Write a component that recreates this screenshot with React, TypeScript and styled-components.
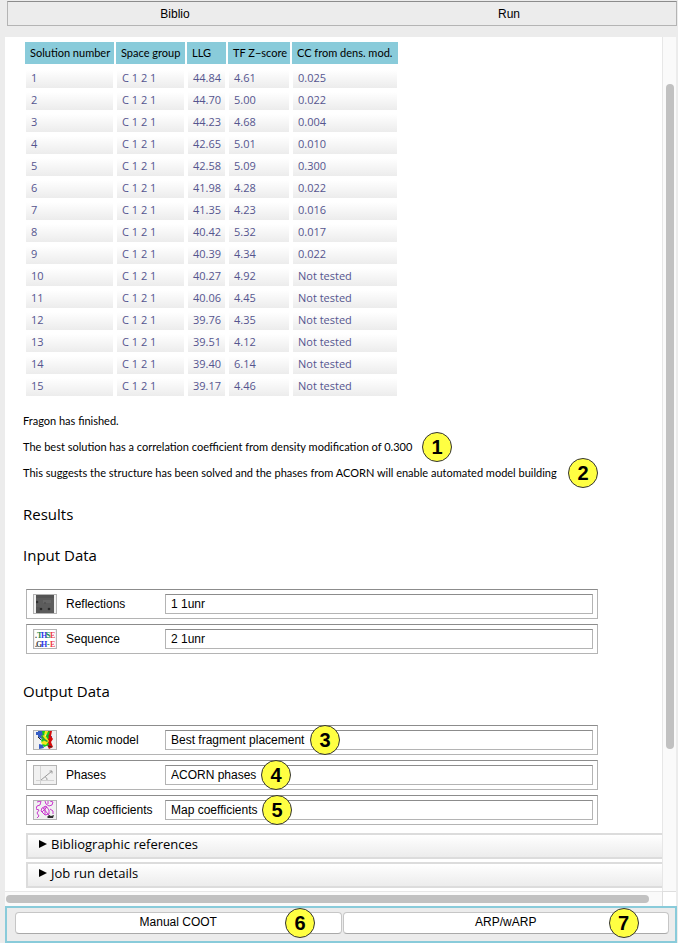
import React, { ReactNode } from "react";
import styled, { createGlobalStyle } from "styled-components";

const sans = `"Liberation Sans", Arial, Helvetica, sans-serif`;
const humanist = `"Open Sans", "Noto Sans", sans-serif`;
const narrow = `Lato, "Open Sans", sans-serif`;
const teal = "#89cbda";

const GlobalStyle = createGlobalStyle`
  * { box-sizing: border-box; }
  body {
    margin: 0;
    background: #ececec;
    color: #000;
    font-family: ${humanist};
    font-size: 11px;
  }
`;

const Window = styled.div`
  display: flex;
  flex-direction: column;
  min-height: 100vh;
  padding: 1px 1px 1px 5px;
`;

const TabBar = styled.nav`
  display: grid;
  grid-template-columns: 1fr 1fr;
  height: 25px;
  margin: 0 0 11px 2px;
  border: 1px solid #b4b4b4;
  border-top-color: #8c8c8c;
`;

const Tab = styled.button`
  padding: 0;
  border: 0;
  background: transparent;
  color: #000;
  font: 12px/22px ${sans};
`;

const ScrollArea = styled.div`
  flex: 1;
  display: grid;
  grid-template-columns: minmax(0, 1fr) 14px;
  grid-template-rows: 1fr 15px;
  margin-right: 1px;
`;

const Page = styled.main`
  overflow: hidden;
  padding: 3px 0 3px 18px;
  background: #fff;
`;

const VerticalTrack = styled.div`
  padding: 47px 2px 0 3px;
  border-left: 1px solid #e7e7e7;
  background: #fafafa;
`;

const HorizontalTrack = styled.div`
  padding: 3px 13px 0 1px;
  border-top: 1px solid #e7e7e7;
  background: #fafafa;
`;

const Corner = styled.div`
  border: 1px solid #dedede;
  border-width: 1px 0 0 1px;
  background: #fff;
`;

const Thumb = styled.div<{ $vertical?: boolean }>`
  width: ${(p) => (p.$vertical ? "8px" : "100%")};
  height: ${(p) => (p.$vertical ? "82.4%" : "8px")};
  border-radius: 4px;
  background: #c1c1c1;
`;

const SolutionTable = styled.table`
  width: 377px;
  table-layout: fixed;
  border-collapse: separate;
  border-spacing: 2px;
`;

const Column = styled.col<{ $width: number }>`
  width: ${(p) => p.$width}px;
`;

const HeadCell = styled.th`
  height: 25px;
  padding: 0 0 0 5px;
  border-bottom: 3px solid #fff;
  background: ${teal} padding-box;
  font: 11px/22px ${narrow};
  text-align: left;
  white-space: nowrap;
`;

const Cell = styled.td`
  height: 20px;
  padding: 0 0 2px 5px;
  border: 1px solid #fff;
  background: linear-gradient(#fff, #ececec) padding-box;
  color: #55558f;
  line-height: 16px;
  white-space: nowrap;
`;

const Messages = styled.div`
  display: grid;
  gap: 10px;
  padding: 14px 0 4px;
`;

const Message = styled.p`
  position: relative;
  margin: 0;
  font: 11px/16px ${narrow};
  white-space: nowrap;
`;

const Heading = styled.h2`
  margin: 0;
  padding-top: 17px;
  font-size: 15px;
  font-weight: 400;
  line-height: 24px;
`;

const DataList = styled.div`
  display: grid;
  gap: 5px;
  margin: 22px 64px 8px 3px;
`;

const DataRow = styled.div`
  display: grid;
  grid-template-columns: 24px 108px minmax(0, 1fr);
  align-items: center;
  height: 30px;
  padding: 0 4px 0 6px;
  border: 1px solid #b4b4b4;
  border-top-color: #8c8c8c;
  font: 12px/18px ${sans};
`;

const IconFrame = styled.span`
  display: flex;
  justify-content: center;
  align-items: center;
  width: 24px;
  height: 20px;
  border: 1px solid #b4b4b4;
  background: #f1f1f1;
`;

const FieldLabel = styled.label`
  padding-left: 9px;
`;

const FieldWrap = styled.div`
  position: relative;
  display: flex;
`;

const Field = styled.input`
  width: 100%;
  height: 20px;
  padding: 0 5px;
  border: 1px solid #b4b4b4;
  border-top-color: #8c8c8c;
  background: #fff;
  color: #000;
  font: 12px/18px ${sans};
  outline: none;
`;

const Badge = styled.span<{ $left: number }>`
  position: absolute;
  top: 50%;
  left: ${(p) => p.$left}px;
  width: 30px;
  height: 30px;
  margin-top: -15px;
  border: 1px solid #333;
  border-radius: 50%;
  background: #ffff42;
  color: #000;
  font: bold 20px/28px ${sans};
  text-align: center;
`;

const Folds = styled.div`
  display: grid;
  gap: 3px;
  margin-left: 3px;
`;

const Fold = styled.button`
  display: flex;
  align-items: center;
  gap: 4px;
  width: 100%;
  height: 26px;
  padding: 0 0 4px 11px;
  border: 2px solid #dcdcdc;
  border-right: 0;
  background: linear-gradient(#fff, #ececec);
  color: #000;
  font: 13px/18px ${humanist};
`;

const ActionBar = styled.footer`
  display: grid;
  grid-template-columns: 1fr 1fr;
  gap: 1px;
  padding: 4px 6px 7px 8px;
  border: 2px solid ${teal};
`;

const Action = styled.div`
  position: relative;
`;

const ActionButton = styled.button`
  display: block;
  width: 100%;
  height: 22px;
  padding: 0 0 2px;
  border: 1px solid #c6c6c6;
  border-bottom-color: #a9a9a9;
  border-radius: 4px;
  background: #fff;
  color: #000;
  font: 12px/18px ${sans};
`;

const solutions: [string, string, string][] = [
  ["44.84", "4.61", "0.025"],
  ["44.70", "5.00", "0.022"],
  ["44.23", "4.68", "0.004"],
  ["42.65", "5.01", "0.010"],
  ["42.58", "5.09", "0.300"],
  ["41.98", "4.28", "0.022"],
  ["41.35", "4.23", "0.016"],
  ["40.42", "5.32", "0.017"],
  ["40.39", "4.34", "0.022"],
  ["40.27", "4.92", "Not tested"],
  ["40.06", "4.45", "Not tested"],
  ["39.76", "4.35", "Not tested"],
  ["39.51", "4.12", "Not tested"],
  ["39.40", "6.14", "Not tested"],
  ["39.17", "4.46", "Not tested"],
];

const ReflectionsIcon = () => (
  <svg width="18" height="18" viewBox="0 0 18 18" aria-hidden="true">
    <rect width="18" height="18" fill="#5c5c5c" />
    <path d="M0 0h18v3H0zM0 12h4v6H0z" fill="#545454" />
    <path d="M7 5h8v3H7z" fill="#666" />
    <circle cx="1" cy="7" r="1.3" fill="#303030" />
    <circle cx="5" cy="14" r="1.3" fill="#2a2a2a" />
    <circle cx="13" cy="14" r="1.3" fill="#2a2a2a" />
    <circle cx="9" cy="8" r="1" fill="#505050" />
  </svg>
);

const SequenceIcon = () => (
  <svg width="20" height="18" viewBox="0 0 20 18" aria-hidden="true">
    <rect width="20" height="18" fill="#fff" />
    <g fontFamily='"Liberation Serif", serif' fontWeight="bold" fontSize="8">
      <text x="0" y="8" fill="#333">.</text>
      <text x="2" y="8" fill="#218a51">T</text>
      <text x="6" y="8" fill="#2a36e8">H</text>
      <text x="11" y="8" fill="#218a51">S</text>
      <text x="15" y="8" fill="#ed3a46">E</text>
      <text x="0" y="17" fill="#333">.</text>
      <text x="1" y="17" fill="#444">G</text>
      <text x="6" y="17" fill="#2a36e8">H</text>
      <text x="12" y="17" fill="#218a51">-</text>
      <text x="15" y="17" fill="#ed3a46">E</text>
    </g>
  </svg>
);

const ModelIcon = () => (
  <svg width="18" height="18" viewBox="0 0 18 18" aria-hidden="true">
    <path d="M2 0h5v5l-1 3-4-2zM0 1h3v3H0zM3 13l4 1 1 3-5 1zM12 5h4v2h-4z" fill="#355dc4" />
    <path d="M12 0h4l-1 5 2 3-2 3 2 5-4 2-2-4 1-4-2-4z" fill="#d60b0b" />
    <path d="M6 0h4l-1 4-2 2zM11 1l3-1-1 4-3 2zM7 7l5-3 1 3-7 5-1-3zM6 13l6-2 1 3-5 2z" fill="#12c91c" />
    <path d="M5 5l4-1 4 6-3 4-4-1-1-2 3-1zM9 0h3l-1 3-3 1z" fill="#f4e81b" />
    <path d="M6 4l3 4 3 2-1 1-4-2-2-4z" fill="#27a536" />
    <path d="M2 6l3 3M12 15l4 1" stroke="#282828" />
  </svg>
);

const PhasesIcon = () => (
  <svg width="20" height="18" viewBox="0 0 20 18" fill="none" aria-hidden="true">
    <path d="M5.5 0v18M1 14.5h18" stroke="#d4d4d4" />
    <path d="M6 14L17 5M14.5 5H17v2.5M10 11c1 0 2 1 2 3" stroke="#9b9b9b" />
  </svg>
);

const MapIcon = () => (
  <svg width="18" height="18" viewBox="0 0 18 18" fill="none" aria-hidden="true">
    <g stroke="#ca39cf">
      <path d="M1 1l4-1-1 4-3 1-1 3 3 1-2 3 2 3-2 2M9 0l1 3 3 2 3-1 1-3-3-1M12 0v3" />
      <path d="M6 7l4-2 3 4v4l-4 1-4-4zM7 7l5 6M11 6l-5 5M9 5v9M12 13l3 3M14 8l3 2v3" />
    </g>
    <path d="M11 16l2-2 2 1 3-1-1 3h-5z" fill="#303030" />
  </svg>
);

interface DataItemProps {
  id: string;
  label: string;
  value: string;
  icon: ReactNode;
  badge?: ReactNode;
}

const DataItem = ({ id, label, value, icon, badge }: DataItemProps) => (
  <DataRow>
    <IconFrame>{icon}</IconFrame>
    <FieldLabel htmlFor={id}>{label}</FieldLabel>
    <FieldWrap>
      <Field id={id} defaultValue={value} />
      {badge}
    </FieldWrap>
  </DataRow>
);

const FoldArrow = () => (
  <svg width="8" height="8" viewBox="0 0 8 8" aria-hidden="true">
    <path d="M0 0l8 4-8 4z" />
  </svg>
);

export default function App() {
  return (
    <>
      <GlobalStyle />
      <Window>
        <TabBar>
          <Tab>Biblio</Tab>
          <Tab>Run</Tab>
        </TabBar>
        <ScrollArea>
          <Page>
            <SolutionTable>
              <colgroup>
                <Column $width={89} />
                <Column $width={69} />
                <Column $width={39} />
                <Column $width={62} />
                <Column $width={106} />
              </colgroup>
              <thead>
                <tr>
                  <HeadCell>Solution number</HeadCell>
                  <HeadCell>Space group</HeadCell>
                  <HeadCell>LLG</HeadCell>
                  <HeadCell>TF Z−score</HeadCell>
                  <HeadCell>CC from dens. mod.</HeadCell>
                </tr>
              </thead>
              <tbody>
                {solutions.map(([llg, score, cc], i) => (
                  <tr key={llg}>
                    <Cell>{i + 1}</Cell>
                    <Cell>C 1 2 1</Cell>
                    <Cell>{llg}</Cell>
                    <Cell>{score}</Cell>
                    <Cell>{cc}</Cell>
                  </tr>
                ))}
              </tbody>
            </SolutionTable>
            <Messages>
              <Message>Fragon has finished.</Message>
              <Message>
                The best solution has a correlation coefficient from density modification of 0.300
                <Badge $left={399}>1</Badge>
              </Message>
              <Message>
                This suggests the structure has been solved and the phases from ACORN will enable automated model building
                <Badge $left={545}>2</Badge>
              </Message>
            </Messages>
            <Heading>Results</Heading>
            <section>
              <Heading>Input Data</Heading>
              <DataList>
                <DataItem id="reflections" label="Reflections" value="1 1unr" icon={<ReflectionsIcon />} />
                <DataItem id="sequence" label="Sequence" value="2 1unr" icon={<SequenceIcon />} />
              </DataList>
            </section>
            <section>
              <Heading>Output Data</Heading>
              <DataList>
                <DataItem
                  id="model"
                  label="Atomic model"
                  value="Best fragment placement"
                  icon={<ModelIcon />}
                  badge={<Badge $left={145}>3</Badge>}
                />
                <DataItem
                  id="phases"
                  label="Phases"
                  value="ACORN phases"
                  icon={<PhasesIcon />}
                  badge={<Badge $left={96}>4</Badge>}
                />
                <DataItem
                  id="map"
                  label="Map coefficients"
                  value="Map coefficients"
                  icon={<MapIcon />}
                  badge={<Badge $left={97}>5</Badge>}
                />
              </DataList>
            </section>
            <Folds>
              <Fold aria-expanded="false">
                <FoldArrow />
                Bibliographic references
              </Fold>
              <Fold aria-expanded="false">
                <FoldArrow />
                Job run details
              </Fold>
            </Folds>
          </Page>
          <VerticalTrack>
            <Thumb $vertical />
          </VerticalTrack>
          <HorizontalTrack>
            <Thumb />
          </HorizontalTrack>
          <Corner />
        </ScrollArea>
        <ActionBar>
          <Action>
            <ActionButton>Manual COOT</ActionButton>
            <Badge $left={270}>6</Badge>
          </Action>
          <Action>
            <ActionButton>ARP/wARP</ActionButton>
            <Badge $left={266}>7</Badge>
          </Action>
        </ActionBar>
      </Window>
    </>
  );
}
